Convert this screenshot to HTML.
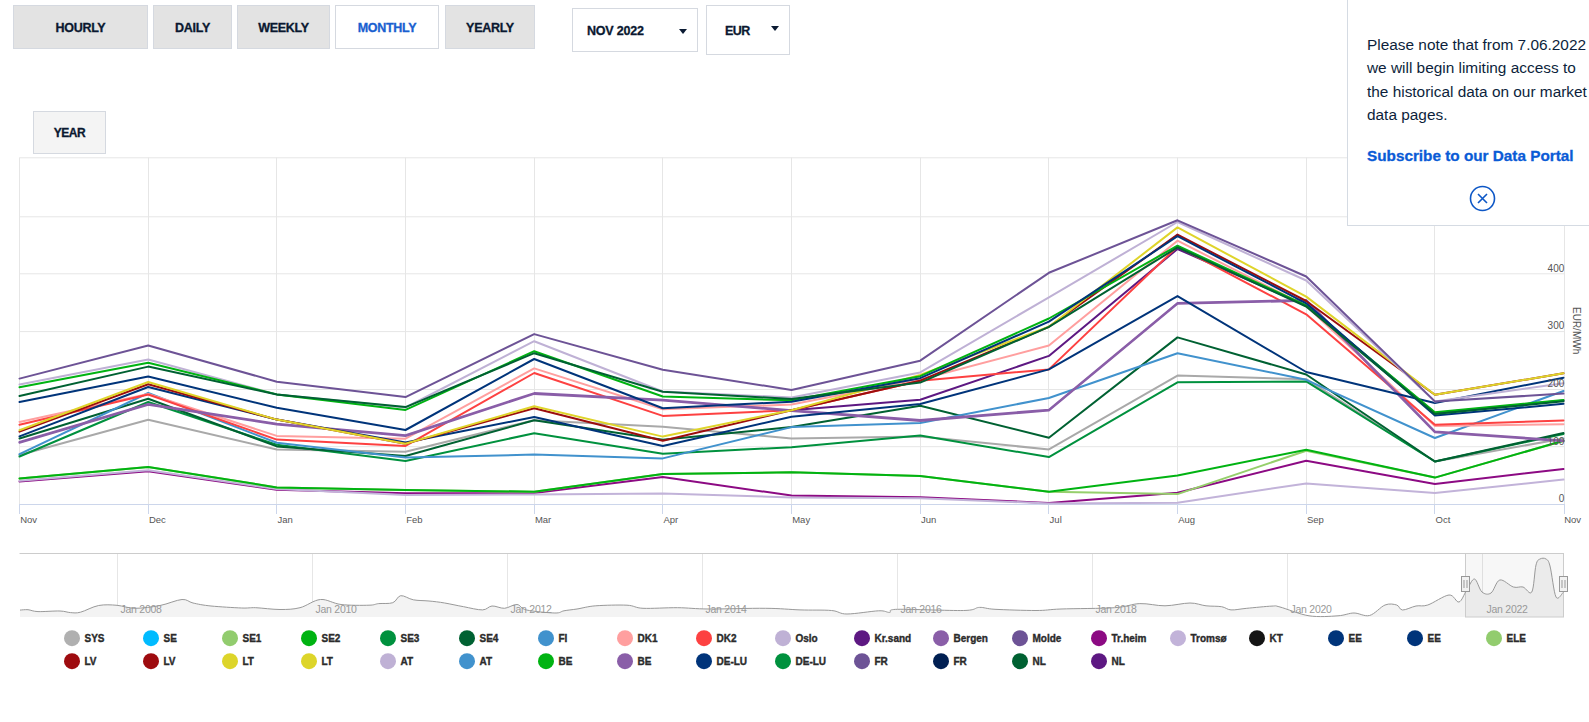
<!DOCTYPE html>
<html><head><meta charset="utf-8"><style>
html,body{margin:0;padding:0;background:#fff;}
body{width:1589px;height:722px;overflow:hidden;position:relative;font-family:"Liberation Sans",sans-serif;}
.btn{position:absolute;box-sizing:border-box;background:#e3e3e3;border:1px solid #d5d9e0;color:#0a1830;font-weight:bold;font-size:12.5px;-webkit-text-stroke:0.3px #0a1830;text-align:center;letter-spacing:-0.3px;padding-top:1px;}
.btn.act{background:#fff;color:#1a5fd0;-webkit-text-stroke:0.3px #1a5fd0;}
.dd{position:absolute;box-sizing:border-box;background:#fff;border:1px solid #d5d9e0;color:#0a1830;font-weight:bold;font-size:12.5px;letter-spacing:-0.2px;-webkit-text-stroke:0.3px #0a1830;}
.tri{position:absolute;width:0;height:0;border-left:4.5px solid transparent;border-right:4.5px solid transparent;border-top:5px solid #0b1b33;}
svg{position:absolute;left:0;top:0;}
svg text{font-family:"Liberation Sans",sans-serif;}
.xl{font-size:9.5px;fill:#555;}
.yl{font-size:10px;fill:#555;}
.yt{font-size:10px;fill:#555;}
.nl{font-size:10.5px;fill:#999;letter-spacing:-0.25px;}
.lg{font-size:10px;font-weight:bold;fill:#2b2b2b;stroke:#2b2b2b;stroke-width:0.35px;}
.pop{position:absolute;left:1347px;top:-2px;width:260px;height:228px;box-sizing:border-box;background:#fff;border:1px solid #d5dbe3;}
.pop p{position:absolute;left:19px;top:34px;margin:0;width:240px;font-size:15.4px;line-height:23.3px;color:#0d1f3c;white-space:nowrap;}
.pop a{position:absolute;left:19px;top:148px;font-size:15.3px;font-weight:bold;color:#0a5bd6;-webkit-text-stroke:0.3px #0a5bd6;text-decoration:none;white-space:nowrap;letter-spacing:0px;}
</style></head><body>
<div class="btn" style="left:13px;top:5px;width:135px;height:44px;line-height:42px;">HOURLY</div>
<div class="btn" style="left:153px;top:5px;width:79px;height:44px;line-height:42px;">DAILY</div>
<div class="btn" style="left:237px;top:5px;width:93px;height:44px;line-height:42px;">WEEKLY</div>
<div class="btn act" style="left:335px;top:5px;width:104px;height:44px;line-height:42px;">MONTHLY</div>
<div class="btn" style="left:445px;top:5px;width:90px;height:44px;line-height:42px;">YEARLY</div>
<div class="dd" style="left:572px;top:8px;width:126px;height:44px;"><span style="position:absolute;left:14px;top:15px;">NOV 2022</span><div class="tri" style="left:106px;top:20px;"></div></div>
<div class="dd" style="left:706px;top:5px;width:84px;height:50px;"><span style="position:absolute;left:18px;top:18px;letter-spacing:-0.5px;">EUR</span><div class="tri" style="left:64px;top:20px;"></div></div>
<div class="btn" style="left:33px;top:111px;width:73px;height:43px;line-height:41px;background:#f4f4f4;font-size:12px;letter-spacing:-0.4px;">YEAR</div>
<svg width="1589" height="722" viewBox="0 0 1589 722">
<line x1="19.5" x2="1564" y1="157.8" y2="157.8" stroke="#e6e6e6" stroke-width="1"/>
<line x1="19.5" x2="1564" y1="216.8" y2="216.8" stroke="#e6e6e6" stroke-width="1"/>
<line x1="19.5" x2="1564" y1="273.8" y2="273.8" stroke="#e6e6e6" stroke-width="1"/>
<line x1="19.5" x2="1564" y1="331.6" y2="331.6" stroke="#e6e6e6" stroke-width="1"/>
<line x1="19.5" x2="1564" y1="389.5" y2="389.5" stroke="#e6e6e6" stroke-width="1"/>
<line x1="19.5" x2="1564" y1="446.7" y2="446.7" stroke="#e6e6e6" stroke-width="1"/>
<line x1="19.5" x2="19.5" y1="157.5" y2="504" stroke="#e6e6e6" stroke-width="1"/>
<line x1="148.5" x2="148.5" y1="157.5" y2="504" stroke="#e6e6e6" stroke-width="1"/>
<line x1="276.5" x2="276.5" y1="157.5" y2="504" stroke="#e6e6e6" stroke-width="1"/>
<line x1="405.5" x2="405.5" y1="157.5" y2="504" stroke="#e6e6e6" stroke-width="1"/>
<line x1="534.5" x2="534.5" y1="157.5" y2="504" stroke="#e6e6e6" stroke-width="1"/>
<line x1="662.5" x2="662.5" y1="157.5" y2="504" stroke="#e6e6e6" stroke-width="1"/>
<line x1="791.5" x2="791.5" y1="157.5" y2="504" stroke="#e6e6e6" stroke-width="1"/>
<line x1="920.5" x2="920.5" y1="157.5" y2="504" stroke="#e6e6e6" stroke-width="1"/>
<line x1="1048.5" x2="1048.5" y1="157.5" y2="504" stroke="#e6e6e6" stroke-width="1"/>
<line x1="1177.5" x2="1177.5" y1="157.5" y2="504" stroke="#e6e6e6" stroke-width="1"/>
<line x1="1306.5" x2="1306.5" y1="157.5" y2="504" stroke="#e6e6e6" stroke-width="1"/>
<line x1="1434.5" x2="1434.5" y1="157.5" y2="504" stroke="#e6e6e6" stroke-width="1"/>
<line x1="1564.5" x2="1564.5" y1="157.5" y2="504" stroke="#e6e6e6" stroke-width="1"/>
<line x1="19.5" x2="1564.5" y1="504.5" y2="504.5" stroke="#ccd6eb" stroke-width="1"/>
<line x1="19.5" x2="19.5" y1="504" y2="514" stroke="#ccd6eb" stroke-width="1"/>
<line x1="148.5" x2="148.5" y1="504" y2="514" stroke="#ccd6eb" stroke-width="1"/>
<line x1="276.5" x2="276.5" y1="504" y2="514" stroke="#ccd6eb" stroke-width="1"/>
<line x1="405.5" x2="405.5" y1="504" y2="514" stroke="#ccd6eb" stroke-width="1"/>
<line x1="534.5" x2="534.5" y1="504" y2="514" stroke="#ccd6eb" stroke-width="1"/>
<line x1="662.5" x2="662.5" y1="504" y2="514" stroke="#ccd6eb" stroke-width="1"/>
<line x1="791.5" x2="791.5" y1="504" y2="514" stroke="#ccd6eb" stroke-width="1"/>
<line x1="920.5" x2="920.5" y1="504" y2="514" stroke="#ccd6eb" stroke-width="1"/>
<line x1="1048.5" x2="1048.5" y1="504" y2="514" stroke="#ccd6eb" stroke-width="1"/>
<line x1="1177.5" x2="1177.5" y1="504" y2="514" stroke="#ccd6eb" stroke-width="1"/>
<line x1="1306.5" x2="1306.5" y1="504" y2="514" stroke="#ccd6eb" stroke-width="1"/>
<line x1="1434.5" x2="1434.5" y1="504" y2="514" stroke="#ccd6eb" stroke-width="1"/>
<line x1="1564.5" x2="1564.5" y1="504" y2="514" stroke="#ccd6eb" stroke-width="1"/>
<polyline points="19.5,455.0 148.2,419.7 276.8,449.5 405.5,451.7 534.2,420.2 662.8,426.8 791.5,438.5 920.2,436.6 1048.9,449.4 1177.5,375.6 1306.2,379.2 1434.9,461.5 1563.5,438.6" fill="none" stroke="#a9a9a9" stroke-width="2" stroke-linejoin="round" stroke-linecap="round"/>
<polyline points="19.5,481.5 148.2,471.2 276.8,489.8 405.5,493.3 534.2,493.1 662.8,477.1 791.5,495.6 920.2,497.3 1048.9,502.9 1177.5,492.7 1306.2,460.8 1434.9,483.9 1563.5,469.0" fill="none" stroke="#8c0a83" stroke-width="2" stroke-linejoin="round" stroke-linecap="round"/>
<polyline points="19.5,480.7 148.2,470.2 276.8,489.0 405.5,494.9 534.2,494.4 662.8,493.5 791.5,497.4 920.2,498.3 1048.9,503.4 1177.5,502.8 1306.2,483.4 1434.9,493.0 1563.5,479.6" fill="none" stroke="#c2b3d9" stroke-width="2" stroke-linejoin="round" stroke-linecap="round"/>
<polyline points="19.5,478.5 148.2,467.0 276.8,487.4 405.5,490.0 534.2,491.7 662.8,474.1 791.5,472.3 920.2,476.1 1048.9,491.7 1177.5,494.1 1306.2,450.7 1434.9,477.6 1563.5,440.8" fill="none" stroke="#96cf6c" stroke-width="2" stroke-linejoin="round" stroke-linecap="round"/>
<polyline points="19.5,478.5 148.2,467.0 276.8,487.4 405.5,490.0 534.2,491.7 662.8,474.1 791.5,472.3 920.2,476.1 1048.9,491.7 1177.5,475.4 1306.2,449.8 1434.9,477.6 1563.5,440.8" fill="none" stroke="#00b312" stroke-width="2" stroke-linejoin="round" stroke-linecap="round"/>
<polyline points="19.5,456.5 148.2,402.0 276.8,444.8 405.5,461.0 534.2,433.2 662.8,453.8 791.5,447.2 920.2,435.4 1048.9,457.1 1177.5,382.3 1306.2,381.4 1434.9,461.5 1563.5,434.0" fill="none" stroke="#00913e" stroke-width="2" stroke-linejoin="round" stroke-linecap="round"/>
<polyline points="19.5,438.5 148.2,398.7 276.8,446.4 405.5,456.0 534.2,420.3 662.8,439.7 791.5,427.1 920.2,405.8 1048.9,437.7 1177.5,337.4 1306.2,374.5 1434.9,461.5 1563.5,433.1" fill="none" stroke="#006132" stroke-width="2" stroke-linejoin="round" stroke-linecap="round"/>
<polyline points="19.5,454.2 148.2,393.0 276.8,442.8 405.5,457.6 534.2,454.6 662.8,458.4 791.5,427.1 920.2,422.9 1048.9,398.0 1177.5,353.2 1306.2,379.8 1434.9,438.0 1563.5,391.0" fill="none" stroke="#4192cd" stroke-width="2" stroke-linejoin="round" stroke-linecap="round"/>
<polyline points="791.5,410.2 920.2,399.8 1048.9,355.9 1177.5,249.0 1306.2,305.5 1434.9,413.0 1563.5,400.5" fill="none" stroke="#5d1882" stroke-width="2" stroke-linejoin="round" stroke-linecap="round"/>
<polyline points="19.5,421.9 148.2,394.0 276.8,435.9 405.5,438.7 534.2,368.4 662.8,409.3 791.5,404.6 920.2,379.5 1048.9,345.5 1177.5,240.7 1306.2,306.0 1434.9,426.0 1563.5,424.2" fill="none" stroke="#ff9f9f" stroke-width="2" stroke-linejoin="round" stroke-linecap="round"/>
<polyline points="19.5,424.7 148.2,394.5 276.8,439.6 405.5,445.9 534.2,373.0 662.8,415.9 791.5,410.2 920.2,380.7 1048.9,369.4 1177.5,246.5 1306.2,314.3 1434.9,424.8 1563.5,420.5" fill="none" stroke="#fd4141" stroke-width="2" stroke-linejoin="round" stroke-linecap="round"/>
<polyline points="19.5,442.0 148.2,404.0 276.8,423.7 405.5,435.2 534.2,393.1 662.8,399.8 791.5,410.2 920.2,420.1 1048.9,409.7 1177.5,303.0 1306.2,300.0 1434.9,431.4 1563.5,440.4" fill="none" stroke="#8a5ea8" stroke-width="2" stroke-linejoin="round" stroke-linecap="round"/>
<polyline points="19.5,442.8 148.2,404.8 276.8,424.5 405.5,436.0 534.2,393.9 662.8,400.6 791.5,411.0 920.2,420.9 1048.9,410.5 1177.5,303.8 1306.2,300.8 1434.9,432.2 1563.5,441.2" fill="none" stroke="#8a5ea8" stroke-width="2" stroke-linejoin="round" stroke-linecap="round"/>
<polyline points="19.5,436.4 148.2,387.0 276.8,419.6 405.5,442.5 534.2,417.0 662.8,445.9 791.5,416.8 920.2,404.0 1048.9,369.4 1177.5,296.1 1306.2,372.0 1434.9,403.0 1563.5,377.7" fill="none" stroke="#00347a" stroke-width="2" stroke-linejoin="round" stroke-linecap="round"/>
<polyline points="19.5,431.6 148.2,384.3 276.8,419.6 405.5,443.8 534.2,408.3 662.8,440.7 791.5,410.2 920.2,380.7 1048.9,326.8 1177.5,234.6 1306.2,301.0 1434.9,394.8 1563.5,373.3" fill="none" stroke="#9c0d0d" stroke-width="2" stroke-linejoin="round" stroke-linecap="round"/>
<polyline points="19.5,430.2 148.2,382.0 276.8,419.6 405.5,443.8 534.2,406.2 662.8,436.6 791.5,410.2 920.2,374.9 1048.9,326.8 1177.5,227.4 1306.2,296.6 1434.9,394.8 1563.5,373.3" fill="none" stroke="#dfd42a" stroke-width="2" stroke-linejoin="round" stroke-linecap="round"/>
<polyline points="19.5,384.5 148.2,359.5 276.8,394.4 405.5,407.5 534.2,341.2 662.8,391.5 791.5,397.5 920.2,372.4 1048.9,297.3 1177.5,222.0 1306.2,280.5 1434.9,401.4 1563.5,383.2" fill="none" stroke="#bfb1d5" stroke-width="2" stroke-linejoin="round" stroke-linecap="round"/>
<polyline points="19.5,387.3 148.2,362.8 276.8,394.4 405.5,409.9 534.2,351.2 662.8,396.5 791.5,400.3 920.2,376.2 1048.9,318.5 1177.5,245.7 1306.2,305.5 1434.9,412.3 1563.5,400.0" fill="none" stroke="#00b312" stroke-width="2" stroke-linejoin="round" stroke-linecap="round"/>
<polyline points="19.5,402.1 148.2,376.5 276.8,407.8 405.5,430.0 534.2,359.0 662.8,408.3 791.5,401.7 920.2,378.2 1048.9,321.6 1177.5,236.2 1306.2,303.3 1434.9,415.6 1563.5,403.8" fill="none" stroke="#00347a" stroke-width="2" stroke-linejoin="round" stroke-linecap="round"/>
<polyline points="19.5,396.0 148.2,366.6 276.8,394.4 405.5,407.1 534.2,353.2 662.8,391.8 791.5,398.9 920.2,382.6 1048.9,326.8 1177.5,247.4 1306.2,306.5 1434.9,414.0 1563.5,401.3" fill="none" stroke="#006132" stroke-width="2" stroke-linejoin="round" stroke-linecap="round"/>
<polyline points="19.5,378.6 148.2,345.5 276.8,381.7 405.5,397.1 534.2,334.1 662.8,369.7 791.5,390.0 920.2,360.7 1048.9,272.8 1177.5,220.3 1306.2,276.5 1434.9,401.4 1563.5,393.6" fill="none" stroke="#6d5396" stroke-width="2" stroke-linejoin="round" stroke-linecap="round"/>
<text x="20.2" y="523" class="xl">Nov</text>
<text x="148.9" y="523" class="xl">Dec</text>
<text x="277.5" y="523" class="xl">Jan</text>
<text x="406.2" y="523" class="xl">Feb</text>
<text x="534.9" y="523" class="xl">Mar</text>
<text x="663.5" y="523" class="xl">Apr</text>
<text x="792.2" y="523" class="xl">May</text>
<text x="920.9" y="523" class="xl">Jun</text>
<text x="1049.6" y="523" class="xl">Jul</text>
<text x="1178.2" y="523" class="xl">Aug</text>
<text x="1306.9" y="523" class="xl">Sep</text>
<text x="1435.6" y="523" class="xl">Oct</text>
<text x="1564.2" y="523" class="xl">Nov</text>
<text x="1564.3" y="502.3" class="yl" text-anchor="end">0</text>
<text x="1564.3" y="444.5" class="yl" text-anchor="end">100</text>
<text x="1564.3" y="387.1" class="yl" text-anchor="end">200</text>
<text x="1564.3" y="329.4" class="yl" text-anchor="end">300</text>
<text x="1564.3" y="271.6" class="yl" text-anchor="end">400</text>
<text class="yt" transform="translate(1573,307) rotate(90)">EUR/MWh</text>
<line x1="117.5" x2="117.5" y1="554" y2="617" stroke="#e6e6e6" stroke-width="1"/>
<line x1="312.5" x2="312.5" y1="554" y2="617" stroke="#e6e6e6" stroke-width="1"/>
<line x1="507.5" x2="507.5" y1="554" y2="617" stroke="#e6e6e6" stroke-width="1"/>
<line x1="702.5" x2="702.5" y1="554" y2="617" stroke="#e6e6e6" stroke-width="1"/>
<line x1="897.5" x2="897.5" y1="554" y2="617" stroke="#e6e6e6" stroke-width="1"/>
<line x1="1092.5" x2="1092.5" y1="554" y2="617" stroke="#e6e6e6" stroke-width="1"/>
<line x1="1287.5" x2="1287.5" y1="554" y2="617" stroke="#e6e6e6" stroke-width="1"/>
<line x1="1482.5" x2="1482.5" y1="554" y2="617" stroke="#e6e6e6" stroke-width="1"/>
<path d="M20,610.1 C21.3,610.0 25.0,609.5 28,609.7 C31.0,610.0 32.7,611.4 38,611.6 C43.3,611.8 54.6,610.8 60,611 C65.4,611.2 67.1,612.4 70.5,612.6 C73.9,612.8 75.8,613.4 80.5,612.2 C85.2,611.0 92.6,606.6 98.7,605.5 C104.8,604.4 111.0,604.8 117,605.3 C123.0,605.8 127.8,608.3 135,608.3 C142.2,608.3 152.2,607.0 160,605.5 C167.8,604.0 176.5,599.9 182,599.5 C187.5,599.1 188.2,601.9 193,603 C197.8,604.1 202.9,605.2 211,606 C219.1,606.8 234.2,607.7 241.6,608 C249.0,608.3 249.3,607.5 255.7,607.7 C262.1,608.0 272.6,609.5 280,609.5 C287.4,609.5 293.2,609.4 300,607.7 C306.8,606.0 313.7,600.0 320.5,599.5 C327.3,599.0 332.9,603.5 341,604.5 C349.1,605.5 362.7,605.4 369,605.2 C375.3,605.1 374.7,604.0 378.7,603.6 C382.7,603.2 389.1,604.0 392.8,602.7 C396.5,601.4 397.3,596.2 400.7,595.7 C404.1,595.2 408.6,598.9 413.3,599.8 C418.0,600.7 423.8,600.5 429,601 C434.2,601.5 438.9,602.0 444.7,603 C450.5,604.0 457.3,605.6 463.6,606.7 C469.9,607.9 477.8,610.0 482.5,609.9 C487.2,609.8 488.3,606.3 492,606 C495.7,605.7 500.3,608.5 504.5,608.3 C508.7,608.0 513.3,604.2 517,604.5 C520.7,604.8 520.3,608.6 526.6,610 C532.9,611.4 548.7,612.9 554.9,613 C561.1,613.1 560.3,611.5 564,610.8 C567.7,610.1 571.7,609.8 577,609 C582.3,608.2 587.5,606.4 595.8,605.8 C604.1,605.2 619.1,604.8 627,605.2 C634.9,605.6 634.6,607.9 643,608.3 C651.4,608.7 666.6,607.6 677.6,607.7 C688.6,607.8 694.3,608.9 709,609 C723.7,609.1 750.5,608.1 765.7,608.3 C780.9,608.4 789.0,609.5 800,609.9 C811.0,610.3 823.7,609.8 831.5,610.5 C839.3,611.2 839.1,614.0 847,614 C854.9,614.0 871.6,611.1 878.7,610.8 C885.8,610.5 886.6,612.6 889.7,612.4 C892.8,612.1 885.2,609.6 897.5,609.3 C909.8,609.0 950.0,610.8 963.6,610.5 C977.2,610.2 974.2,607.6 979.4,607.4 C984.6,607.2 985.6,608.8 995,609.3 C1004.4,609.8 1025.0,610.5 1036,610.5 C1047.0,610.5 1047.9,609.5 1061,609 C1074.1,608.5 1101.6,608.6 1114.7,607.7 C1127.8,606.8 1131.4,603.9 1139.8,603.6 C1148.2,603.3 1156.6,605.9 1165,605.8 C1173.4,605.7 1183.2,603.0 1190,603 C1196.8,603.0 1200.7,605.2 1206,605.8 C1211.3,606.4 1217.4,606.0 1221.6,606.7 C1225.8,607.4 1226.8,609.6 1231,609.9 C1235.2,610.2 1240.0,608.9 1246.8,608.3 C1253.6,607.7 1266.5,606.3 1272,606.1 C1277.5,605.9 1273.8,605.4 1280,607 C1286.2,608.6 1299.3,614.3 1309,615.8 C1318.7,617.3 1330.5,616.3 1338,615.8 C1345.5,615.3 1348.8,613.0 1354,613 C1359.2,613.0 1364.3,616.8 1369.5,615.5 C1374.7,614.2 1380.5,606.8 1385,605 C1389.5,603.2 1393.8,604.2 1396.7,605 C1399.6,605.8 1399.3,609.8 1402.5,610 C1405.7,610.2 1411.8,606.8 1416,606 C1420.2,605.2 1422.3,606.8 1427.8,605 C1433.3,603.2 1443.8,595.5 1449,595 C1454.2,594.5 1456.0,602.8 1459,602 C1462.0,601.2 1464.1,593.8 1466.7,590 C1469.3,586.2 1472.0,578.7 1474.5,579 C1477.0,579.3 1479.2,589.7 1482,592 C1484.8,594.3 1488.0,595.0 1491,593 C1494.0,591.0 1496.1,581.0 1499.8,580 C1503.5,579.0 1509.5,585.8 1513.4,587 C1517.3,588.2 1519.9,586.2 1523,587 C1526.1,587.8 1529.6,595.7 1531.8,592 C1534.0,588.3 1534.6,570.5 1536,565 C1537.4,559.5 1538.3,560.0 1540,559 C1541.7,558.0 1544.3,557.8 1546,559 C1547.7,560.2 1548.3,559.7 1550,566 C1551.7,572.3 1553.8,592.7 1556,597 C1558.2,601.3 1562.2,592.8 1563.5,592 L1563.5,617 L20,617 Z" fill="#f3f3f3" stroke="none"/>
<line x1="19.5" x2="1564" y1="553.5" y2="553.5" stroke="#cccccc" stroke-width="1"/>
<rect x="1465.5" y="553.5" width="98" height="63.5" fill="rgba(102,102,102,0.055)" stroke="#cccccc" stroke-width="1"/>
<path d="M20,610.1 C21.3,610.0 25.0,609.5 28,609.7 C31.0,610.0 32.7,611.4 38,611.6 C43.3,611.8 54.6,610.8 60,611 C65.4,611.2 67.1,612.4 70.5,612.6 C73.9,612.8 75.8,613.4 80.5,612.2 C85.2,611.0 92.6,606.6 98.7,605.5 C104.8,604.4 111.0,604.8 117,605.3 C123.0,605.8 127.8,608.3 135,608.3 C142.2,608.3 152.2,607.0 160,605.5 C167.8,604.0 176.5,599.9 182,599.5 C187.5,599.1 188.2,601.9 193,603 C197.8,604.1 202.9,605.2 211,606 C219.1,606.8 234.2,607.7 241.6,608 C249.0,608.3 249.3,607.5 255.7,607.7 C262.1,608.0 272.6,609.5 280,609.5 C287.4,609.5 293.2,609.4 300,607.7 C306.8,606.0 313.7,600.0 320.5,599.5 C327.3,599.0 332.9,603.5 341,604.5 C349.1,605.5 362.7,605.4 369,605.2 C375.3,605.1 374.7,604.0 378.7,603.6 C382.7,603.2 389.1,604.0 392.8,602.7 C396.5,601.4 397.3,596.2 400.7,595.7 C404.1,595.2 408.6,598.9 413.3,599.8 C418.0,600.7 423.8,600.5 429,601 C434.2,601.5 438.9,602.0 444.7,603 C450.5,604.0 457.3,605.6 463.6,606.7 C469.9,607.9 477.8,610.0 482.5,609.9 C487.2,609.8 488.3,606.3 492,606 C495.7,605.7 500.3,608.5 504.5,608.3 C508.7,608.0 513.3,604.2 517,604.5 C520.7,604.8 520.3,608.6 526.6,610 C532.9,611.4 548.7,612.9 554.9,613 C561.1,613.1 560.3,611.5 564,610.8 C567.7,610.1 571.7,609.8 577,609 C582.3,608.2 587.5,606.4 595.8,605.8 C604.1,605.2 619.1,604.8 627,605.2 C634.9,605.6 634.6,607.9 643,608.3 C651.4,608.7 666.6,607.6 677.6,607.7 C688.6,607.8 694.3,608.9 709,609 C723.7,609.1 750.5,608.1 765.7,608.3 C780.9,608.4 789.0,609.5 800,609.9 C811.0,610.3 823.7,609.8 831.5,610.5 C839.3,611.2 839.1,614.0 847,614 C854.9,614.0 871.6,611.1 878.7,610.8 C885.8,610.5 886.6,612.6 889.7,612.4 C892.8,612.1 885.2,609.6 897.5,609.3 C909.8,609.0 950.0,610.8 963.6,610.5 C977.2,610.2 974.2,607.6 979.4,607.4 C984.6,607.2 985.6,608.8 995,609.3 C1004.4,609.8 1025.0,610.5 1036,610.5 C1047.0,610.5 1047.9,609.5 1061,609 C1074.1,608.5 1101.6,608.6 1114.7,607.7 C1127.8,606.8 1131.4,603.9 1139.8,603.6 C1148.2,603.3 1156.6,605.9 1165,605.8 C1173.4,605.7 1183.2,603.0 1190,603 C1196.8,603.0 1200.7,605.2 1206,605.8 C1211.3,606.4 1217.4,606.0 1221.6,606.7 C1225.8,607.4 1226.8,609.6 1231,609.9 C1235.2,610.2 1240.0,608.9 1246.8,608.3 C1253.6,607.7 1266.5,606.3 1272,606.1 C1277.5,605.9 1273.8,605.4 1280,607 C1286.2,608.6 1299.3,614.3 1309,615.8 C1318.7,617.3 1330.5,616.3 1338,615.8 C1345.5,615.3 1348.8,613.0 1354,613 C1359.2,613.0 1364.3,616.8 1369.5,615.5 C1374.7,614.2 1380.5,606.8 1385,605 C1389.5,603.2 1393.8,604.2 1396.7,605 C1399.6,605.8 1399.3,609.8 1402.5,610 C1405.7,610.2 1411.8,606.8 1416,606 C1420.2,605.2 1422.3,606.8 1427.8,605 C1433.3,603.2 1443.8,595.5 1449,595 C1454.2,594.5 1456.0,602.8 1459,602 C1462.0,601.2 1464.1,593.8 1466.7,590 C1469.3,586.2 1472.0,578.7 1474.5,579 C1477.0,579.3 1479.2,589.7 1482,592 C1484.8,594.3 1488.0,595.0 1491,593 C1494.0,591.0 1496.1,581.0 1499.8,580 C1503.5,579.0 1509.5,585.8 1513.4,587 C1517.3,588.2 1519.9,586.2 1523,587 C1526.1,587.8 1529.6,595.7 1531.8,592 C1534.0,588.3 1534.6,570.5 1536,565 C1537.4,559.5 1538.3,560.0 1540,559 C1541.7,558.0 1544.3,557.8 1546,559 C1547.7,560.2 1548.3,559.7 1550,566 C1551.7,572.3 1553.8,592.7 1556,597 C1558.2,601.3 1562.2,592.8 1563.5,592" fill="none" stroke="#999999" stroke-width="1"/>
<text x="120.5" y="613" class="nl">Jan 2008</text>
<text x="315.5" y="613" class="nl">Jan 2010</text>
<text x="510.5" y="613" class="nl">Jan 2012</text>
<text x="705.5" y="613" class="nl">Jan 2014</text>
<text x="900.5" y="613" class="nl">Jan 2016</text>
<text x="1095.5" y="613" class="nl">Jan 2018</text>
<text x="1290.5" y="613" class="nl">Jan 2020</text>
<text x="1486.5" y="613" class="nl">Jan 2022</text>
<rect x="1461.5" y="576.5" width="8" height="15" fill="#f2f2f2" stroke="#999999" stroke-width="1"/>
<line x1="1464.0" x2="1464.0" y1="580" y2="588" stroke="#999" stroke-width="1"/>
<line x1="1467.0" x2="1467.0" y1="580" y2="588" stroke="#999" stroke-width="1"/>
<rect x="1559.5" y="576.5" width="8" height="15" fill="#f2f2f2" stroke="#999999" stroke-width="1"/>
<line x1="1562.0" x2="1562.0" y1="580" y2="588" stroke="#999" stroke-width="1"/>
<line x1="1565.0" x2="1565.0" y1="580" y2="588" stroke="#999" stroke-width="1"/>
<circle cx="72" cy="638.2" r="8" fill="#b0b0b0"/>
<text x="84.5" y="642.3" class="lg">SYS</text>
<circle cx="151" cy="638.2" r="8" fill="#00bbff"/>
<text x="163.5" y="642.3" class="lg">SE</text>
<circle cx="230" cy="638.2" r="8" fill="#92cc6e"/>
<text x="242.5" y="642.3" class="lg">SE1</text>
<circle cx="309" cy="638.2" r="8" fill="#00b312"/>
<text x="321.5" y="642.3" class="lg">SE2</text>
<circle cx="388" cy="638.2" r="8" fill="#00913e"/>
<text x="400.5" y="642.3" class="lg">SE3</text>
<circle cx="467" cy="638.2" r="8" fill="#006132"/>
<text x="479.5" y="642.3" class="lg">SE4</text>
<circle cx="546" cy="638.2" r="8" fill="#4192cd"/>
<text x="558.5" y="642.3" class="lg">FI</text>
<circle cx="625" cy="638.2" r="8" fill="#ff9f9f"/>
<text x="637.5" y="642.3" class="lg">DK1</text>
<circle cx="704" cy="638.2" r="8" fill="#fd4141"/>
<text x="716.5" y="642.3" class="lg">DK2</text>
<circle cx="783" cy="638.2" r="8" fill="#bfb1d5"/>
<text x="795.5" y="642.3" class="lg">Oslo</text>
<circle cx="862" cy="638.2" r="8" fill="#5d1882"/>
<text x="874.5" y="642.3" class="lg">Kr.sand</text>
<circle cx="941" cy="638.2" r="8" fill="#8a5ea8"/>
<text x="953.5" y="642.3" class="lg">Bergen</text>
<circle cx="1020" cy="638.2" r="8" fill="#6d5396"/>
<text x="1032.5" y="642.3" class="lg">Molde</text>
<circle cx="1099" cy="638.2" r="8" fill="#8c0a83"/>
<text x="1111.5" y="642.3" class="lg">Tr.heim</text>
<circle cx="1178" cy="638.2" r="8" fill="#c2b3d9"/>
<text x="1190.5" y="642.3" class="lg">Tromsø</text>
<circle cx="1257" cy="638.2" r="8" fill="#141414"/>
<text x="1269.5" y="642.3" class="lg">KT</text>
<circle cx="1336" cy="638.2" r="8" fill="#00347a"/>
<text x="1348.5" y="642.3" class="lg">EE</text>
<circle cx="1415" cy="638.2" r="8" fill="#00347a"/>
<text x="1427.5" y="642.3" class="lg">EE</text>
<circle cx="1494" cy="638.2" r="8" fill="#92cc6e"/>
<text x="1506.5" y="642.3" class="lg">ELE</text>
<circle cx="72" cy="661.2" r="8" fill="#9e0b0f"/>
<text x="84.5" y="665.3" class="lg">LV</text>
<circle cx="151" cy="661.2" r="8" fill="#9e0b0f"/>
<text x="163.5" y="665.3" class="lg">LV</text>
<circle cx="230" cy="661.2" r="8" fill="#ddd52a"/>
<text x="242.5" y="665.3" class="lg">LT</text>
<circle cx="309" cy="661.2" r="8" fill="#ddd52a"/>
<text x="321.5" y="665.3" class="lg">LT</text>
<circle cx="388" cy="661.2" r="8" fill="#bfb1d5"/>
<text x="400.5" y="665.3" class="lg">AT</text>
<circle cx="467" cy="661.2" r="8" fill="#4192cd"/>
<text x="479.5" y="665.3" class="lg">AT</text>
<circle cx="546" cy="661.2" r="8" fill="#00b312"/>
<text x="558.5" y="665.3" class="lg">BE</text>
<circle cx="625" cy="661.2" r="8" fill="#8a5ea8"/>
<text x="637.5" y="665.3" class="lg">BE</text>
<circle cx="704" cy="661.2" r="8" fill="#00347a"/>
<text x="716.5" y="665.3" class="lg">DE-LU</text>
<circle cx="783" cy="661.2" r="8" fill="#00913e"/>
<text x="795.5" y="665.3" class="lg">DE-LU</text>
<circle cx="862" cy="661.2" r="8" fill="#6d5396"/>
<text x="874.5" y="665.3" class="lg">FR</text>
<circle cx="941" cy="661.2" r="8" fill="#001f52"/>
<text x="953.5" y="665.3" class="lg">FR</text>
<circle cx="1020" cy="661.2" r="8" fill="#006132"/>
<text x="1032.5" y="665.3" class="lg">NL</text>
<circle cx="1099" cy="661.2" r="8" fill="#5d1882"/>
<text x="1111.5" y="665.3" class="lg">NL</text>
</svg>
<div class="pop">
<p>Please note that from 7.06.2022<br>we will begin limiting access to<br>the historical data on our market<br>data pages.</p>
<a>Subscribe to our Data Portal</a>
<svg width="27" height="27" style="position:absolute;left:121px;top:186px;" viewBox="0 0 27 27"><circle cx="13.5" cy="13.5" r="12" fill="none" stroke="#0d57c6" stroke-width="1.6"/><path d="M9 9 L18 18 M18 9 L9 18" stroke="#0d57c6" stroke-width="1.6"/></svg>
</div>
</body></html>
